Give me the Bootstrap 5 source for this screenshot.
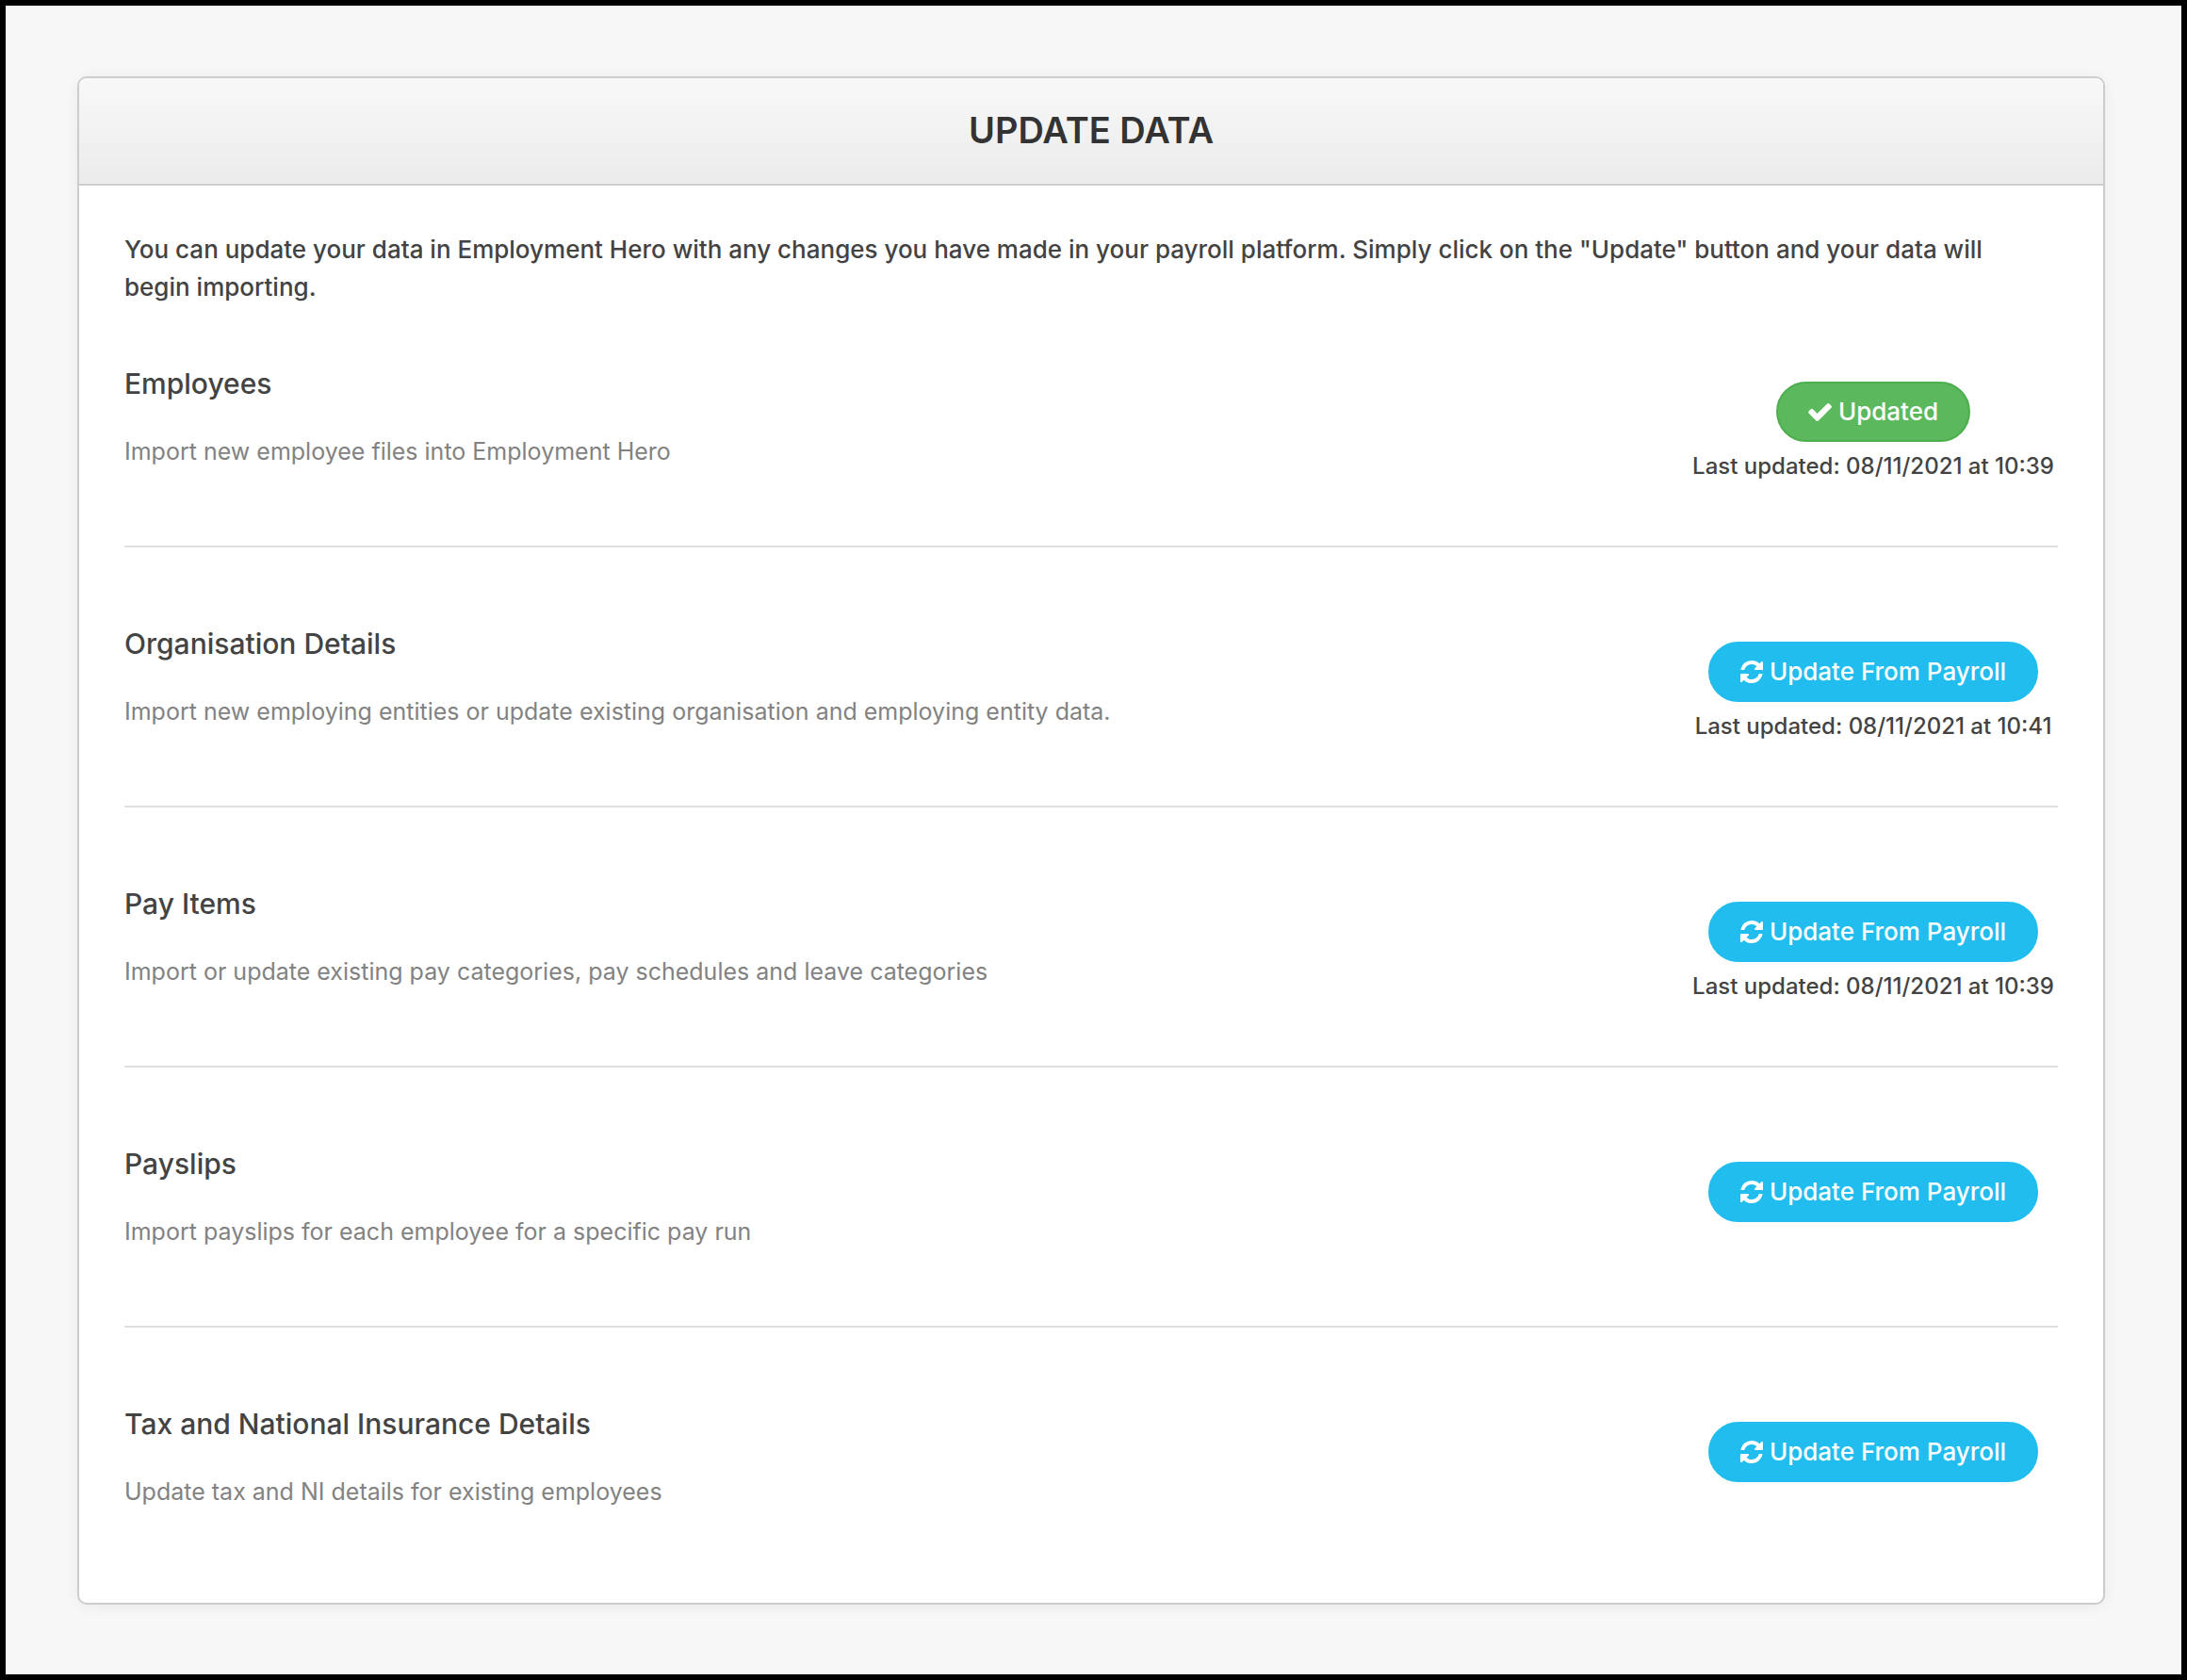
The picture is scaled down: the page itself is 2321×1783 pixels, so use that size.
<!DOCTYPE html>
<html lang="en">
<head>
<meta charset="utf-8">
<meta name="viewport" content="width=device-width, initial-scale=1">
<title>Update Data</title>
<link rel="stylesheet" href="https://cdn.jsdelivr.net/npm/bootstrap@5.3.0/dist/css/bootstrap.min.css">
<style>
  body { font-family: Inter, Lato, sans-serif; font-size: 26px; line-height: 40px; font-weight: 500; color: #434343; background: #f7f7f7; border: 6px solid #000; }
  .page-main { padding: 75px 81px 74px 76px; }
  .panel-card { border: 2px solid #ccc; border-radius: 10px; box-shadow: 0 2px 16px rgba(0,0,0,.06); }
  .panel-card .card-header { padding: 31px 48px 33px; background: linear-gradient(#f8f8f8, #ebebeb); border-bottom: 2px solid #ccc; border-radius: 8px 8px 0 0; }
  .panel-title { font-size: 38px; line-height: 48px; font-weight: 600; color: #333; }
  .panel-card .card-body { padding: 48px; }
  .intro { margin-bottom: 60px; }
  .import-row { padding-bottom: 82px; }
  .import-row + .import-row { border-top: 2px solid #e0e0e0; padding-top: 80px; }
  .import-row:last-child { padding-bottom: 52px; }
  .item-title { font-size: 30px; line-height: 44px; font-weight: 500; margin-bottom: 32px; }
  .item-note { font-size: 25px; line-height: 36px; font-weight: 400; color: #828282; }
  .item-action { width: 392px; padding-top: 20px; height: 112px; }
  .btn-pill { height: 64px; padding: 0 32px; gap: 7px; border-width: 2px; border-radius: 32px; font-size: 26px; line-height: 40px; font-weight: 500; color: #fff; background: #20bdee; border-color: #20bdee; }
  .btn-pill.is-done { background: #5cb85c; border-color: #4cae4c; }
  .btn-pill:hover { color: #fff; background: #139fcb; }
  .stamp { font-size: 24px; line-height: 40px; margin-top: 6px; }
</style>
<script src="https://cdn.jsdelivr.net/npm/bootstrap@5.3.0/dist/js/bootstrap.bundle.min.js" defer></script>
</head>
<body>
<svg class="d-none" aria-hidden="true">
  <symbol id="refresh" viewBox="0 0 1536 1536"><path d="M1511 928q0 5-1 7-64 268-268 434.500T764 1536q-146 0-282.500-55T238 1324l-129 129q-19 19-45 19t-45-19-19-45V960q0-26 19-45t45-19h448q26 0 45 19t19 45-19 45l-137 137q71 66 161 102t187 36q134 0 250-65t186-179q11-17 53-117 8-23 30-23h192q13 0 22.500 9.500t9.500 22.500zm25-800v448q0 26-19 45t-45 19h-448q-26 0-45-19t-19-45 19-45l138-138Q969 256 768 256q-134 0-250 65T332 500q-11 17-53 117-8 23-30 23H50q-13 0-22.500-9.500T18 608v-7q65-268 270-434.500T768 0q146 0 284 55.500T1297 212l130-129q19-19 45-19t45 19 19 45z"/></symbol>
  <symbol id="check" viewBox="121 188 1550 1188"><path d="M1671 566q0 40-28 68l-724 724-136 136q-28 28-68 28t-68-28l-136-136-362-362q-28-28-28-68t28-68l136-136q28-28 68-28t68 28l294 295 656-657q28-28 68-28t68 28l136 136q28 28 28 68z" transform="translate(0 -146)"/></symbol>
</svg>
<main class="page-main">
  <section class="card panel-card">
    <header class="card-header text-center"><h1 class="panel-title m-0">UPDATE DATA</h1></header>
    <div class="card-body">
      <p class="intro pe-4">You can update your data in Employment Hero with any changes you have made in your payroll platform. Simply click on the "Update" button and your data will begin importing.</p>

      <div class="import-row d-flex">
        <div class="flex-grow-1">
          <h2 class="item-title">Employees</h2>
          <p class="item-note m-0">Import new employee files into Employment Hero</p>
        </div>
        <div class="item-action flex-shrink-0 d-flex flex-column align-items-center text-nowrap">
          <button type="button" class="btn btn-pill is-done d-flex align-items-center flex-shrink-0"><svg width="25" height="19" fill="currentColor" aria-hidden="true"><use href="#check"/></svg>Updated</button>
          <div class="stamp">Last updated: 08/11/2021 at 10:39</div>
        </div>
      </div>

      <div class="import-row d-flex">
        <div class="flex-grow-1">
          <h2 class="item-title">Organisation Details</h2>
          <p class="item-note m-0">Import new employing entities or update existing organisation and employing entity data.</p>
        </div>
        <div class="item-action flex-shrink-0 d-flex flex-column align-items-center text-nowrap">
          <button type="button" class="btn btn-pill d-flex align-items-center flex-shrink-0"><svg width="24" height="24" fill="currentColor" aria-hidden="true"><use href="#refresh"/></svg>Update From Payroll</button>
          <div class="stamp">Last updated: 08/11/2021 at 10:41</div>
        </div>
      </div>

      <div class="import-row d-flex">
        <div class="flex-grow-1">
          <h2 class="item-title">Pay Items</h2>
          <p class="item-note m-0">Import or update existing pay categories, pay schedules and leave categories</p>
        </div>
        <div class="item-action flex-shrink-0 d-flex flex-column align-items-center text-nowrap">
          <button type="button" class="btn btn-pill d-flex align-items-center flex-shrink-0"><svg width="24" height="24" fill="currentColor" aria-hidden="true"><use href="#refresh"/></svg>Update From Payroll</button>
          <div class="stamp">Last updated: 08/11/2021 at 10:39</div>
        </div>
      </div>

      <div class="import-row d-flex">
        <div class="flex-grow-1">
          <h2 class="item-title">Payslips</h2>
          <p class="item-note m-0">Import payslips for each employee for a specific pay run</p>
        </div>
        <div class="item-action flex-shrink-0 d-flex flex-column align-items-center text-nowrap">
          <button type="button" class="btn btn-pill d-flex align-items-center flex-shrink-0"><svg width="24" height="24" fill="currentColor" aria-hidden="true"><use href="#refresh"/></svg>Update From Payroll</button>
        </div>
      </div>

      <div class="import-row d-flex">
        <div class="flex-grow-1">
          <h2 class="item-title">Tax and National Insurance Details</h2>
          <p class="item-note m-0">Update tax and NI details for existing employees</p>
        </div>
        <div class="item-action flex-shrink-0 d-flex flex-column align-items-center text-nowrap">
          <button type="button" class="btn btn-pill d-flex align-items-center flex-shrink-0"><svg width="24" height="24" fill="currentColor" aria-hidden="true"><use href="#refresh"/></svg>Update From Payroll</button>
        </div>
      </div>
    </div>
  </section>
</main>
</body>
</html>
